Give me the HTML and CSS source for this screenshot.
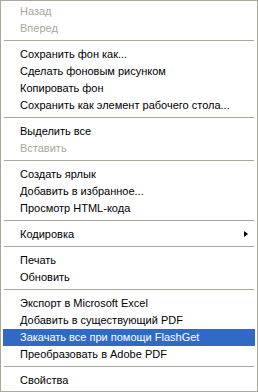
FILE: index.html
```html
<!DOCTYPE html>
<html lang="ru">
<head>
    <meta charset="UTF-8">
    <title>Контекстное меню</title>
    <link rel="stylesheet" href="styles.css">
</head>
<body>
    <div class="menu">
        <div class="item disabled">Назад</div>
        <div class="item disabled">Вперед</div>
        <div class="sep"></div>
        <div class="item">Сохранить фон как...</div>
        <div class="item">Сделать фоновым рисунком</div>
        <div class="item">Копировать фон</div>
        <div class="item">Сохранить как элемент рабочего стола...</div>
        <div class="sep"></div>
        <div class="item">Выделить все</div>
        <div class="item disabled">Вставить</div>
        <div class="sep"></div>
        <div class="item">Создать ярлык</div>
        <div class="item">Добавить в избранное...</div>
        <div class="item">Просмотр HTML-кода</div>
        <div class="sep"></div>
        <div class="item submenu">Кодировка</div>
        <div class="sep"></div>
        <div class="item">Печать</div>
        <div class="item">Обновить</div>
        <div class="sep"></div>
        <div class="item">Экспорт в Microsoft Excel</div>
        <div class="item">Добавить в существующий PDF</div>
        <div class="item active">Закачать все при помощи FlashGet</div>
        <div class="item">Преобразовать в Adobe PDF</div>
        <div class="sep"></div>
        <div class="item">Свойства</div>
    </div>
</body>
</html>
```

FILE: styles.css
```css
body,
html {
    margin: 0;
    padding: 0;
    background-color: white;
}

.menu {
    width: 258px;
    height: 392px;
    box-sizing: border-box;
    border: 1px solid #aca899;
    padding: 2px;
    background-color: white;
    font-family: "Liberation Sans", Arial, sans-serif;
    font-size: 11px;
    color: black;
}

.item {
    position: relative;
    height: 17px;
    line-height: 17px;
    padding-left: 17px;
    white-space: nowrap;
}

.item.disabled {
    color: #aca899;
}

.item.active {
    background-color: #316ac5;
    color: white;
}

.item.submenu::after {
    content: "";
    position: absolute;
    right: 7px;
    top: 5px;
    border-left: 4px solid black;
    border-top: 3.5px solid transparent;
    border-bottom: 3.5px solid transparent;
}

.sep {
    height: 9px;
    margin: 0 1px;
    box-sizing: border-box;
    padding-top: 3px;
}

.sep::before {
    content: "";
    display: block;
    height: 1px;
    background-color: #aca899;
}
```
